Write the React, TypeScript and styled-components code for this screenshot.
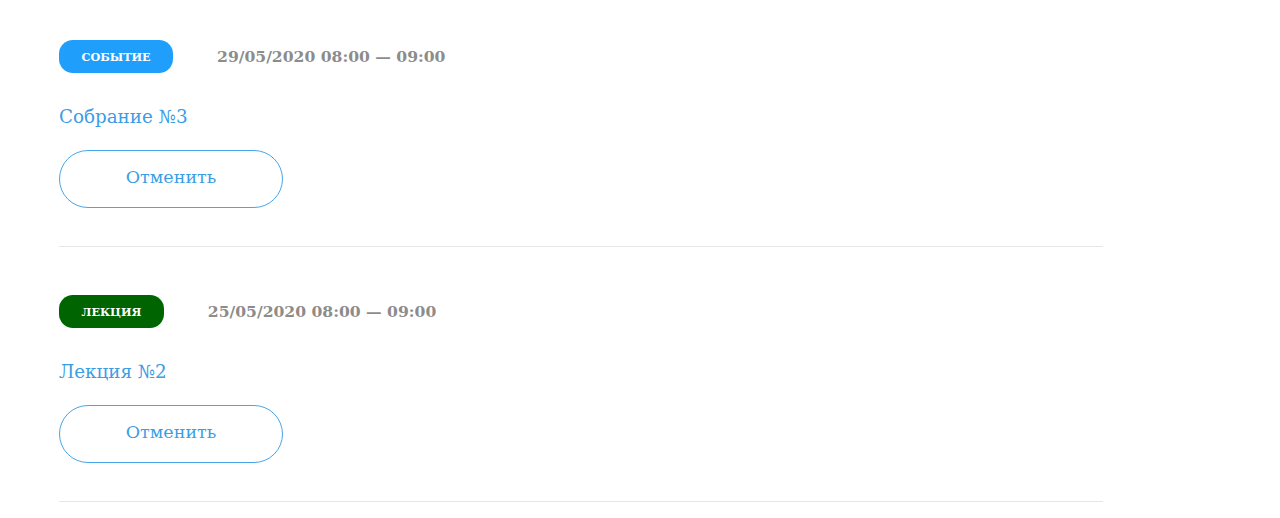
import React from 'react';
import styled, { createGlobalStyle } from 'styled-components';

interface EventItem {
  kind: string;
  kindColor: string;
  date: string;
  title: string;
}

const events: EventItem[] = [
  { kind: 'Событие', kindColor: '#1f9ffb', date: '29/05/2020 08:00 — 09:00', title: 'Собрание №3' },
  { kind: 'Лекция', kindColor: '#006400', date: '25/05/2020 08:00 — 09:00', title: 'Лекция №2' },
];

const GlobalStyle = createGlobalStyle`
  body {
    margin: 0;
    background: #ffffff;
    font-family: "DejaVu Serif", "Liberation Serif", serif;
  }
`;

export default function App() {
  return (
    <>
      <GlobalStyle />
      <Page>
        {events.map((ev, index) => (
          <Item key={index}>
            <Meta>
              <Badge $color={ev.kindColor}>{ev.kind}</Badge>
              <DateText>{ev.date}</DateText>
            </Meta>
            <Title>{ev.title}</Title>
            <CancelButton type="button">Отменить</CancelButton>
          </Item>
        ))}
      </Page>
    </>
  );
}

const Page = styled.div`
  display: flex;
  flex-direction: column;
  gap: 48px;
  padding: 40px 0 0 59px;
  width: 1044px;
`;

const Item = styled.div`
  display: flex;
  flex-direction: column;
  align-items: flex-start;
  padding-bottom: 38px;
  border-bottom: 1px solid #e6e6e6;
`;

const Meta = styled.div`
  display: flex;
  align-items: center;
  gap: 44px;
`;

const Badge = styled.span<{ $color: string }>`
  display: inline-flex;
  align-items: center;
  justify-content: center;
  height: 33px;
  padding: 0 22.5px;
  border-radius: 14px;
  background: ${(p) => p.$color};
  color: #ffffff;
  font-size: 11.2px;
  font-weight: 700;
  text-transform: uppercase;
`;

const DateText = styled.span`
  color: #8c8c8c;
  font-size: 15.6px;
  font-weight: 700;
`;

const Title = styled.div`
  margin-top: 33px;
  color: #3a9de6;
  font-size: 18.3px;
  line-height: 22px;
`;

const CancelButton = styled.button`
  margin-top: 22px;
  width: 224px;
  height: 58px;
  border: 1px solid #46a6ea;
  border-radius: 29px;
  background: #ffffff;
  color: #3a9de6;
  font-family: inherit;
  font-size: 17.5px;
  line-height: 1;
  padding: 0 0 2px;
  cursor: pointer;
`;
